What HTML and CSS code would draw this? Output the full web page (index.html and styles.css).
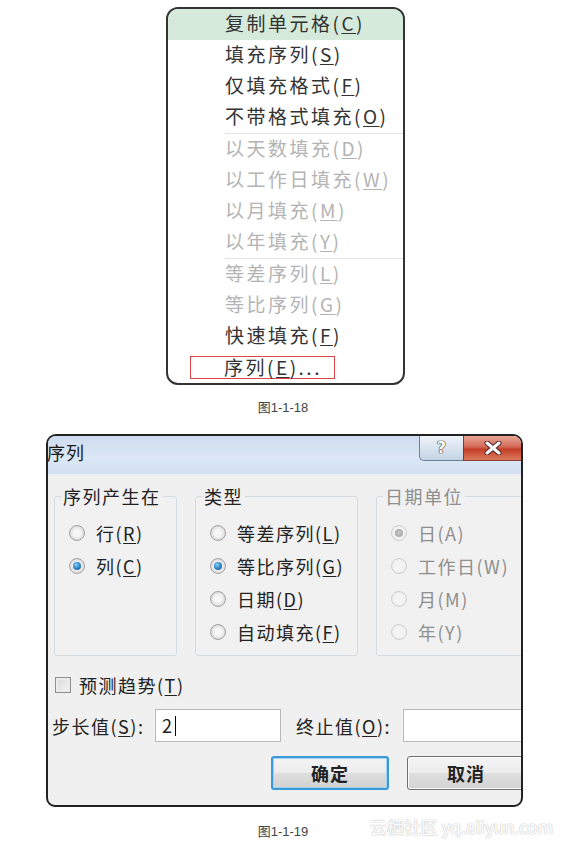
FILE: index.html
```html
<!DOCTYPE html>
<html lang="zh-CN">
<head>
    <meta charset="UTF-8">
    <meta name="viewport" content="width=device-width, initial-scale=1.0">
    <title>序列</title>
    <link rel="stylesheet" href="styles.css">
</head>
<body>

<!-- fill handle menu -->
<div class="menu">
    <div class="item active">复制单元格(<u>C</u>)</div>
    <div class="item">填充序列(<u>S</u>)</div>
    <div class="item">仅填充格式(<u>F</u>)</div>
    <div class="item">不带格式填充(<u>O</u>)</div>
    <div class="sep"></div>
    <div class="item off">以天数填充(<u>D</u>)</div>
    <div class="item off">以工作日填充(<u>W</u>)</div>
    <div class="item off">以月填充(<u>M</u>)</div>
    <div class="item off">以年填充(<u>Y</u>)</div>
    <div class="sep"></div>
    <div class="item off">等差序列(<u>L</u>)</div>
    <div class="item off">等比序列(<u>G</u>)</div>
    <div class="item">快速填充(<u>F</u>)</div>
    <div class="item pick"><span class="mark">序列(<u>E</u>)...</span></div>
</div>
<p class="caption">图1-1-18</p>

<!-- series dialog -->
<div class="dialog">
    <div class="titlebar">
        <span class="title">序列</span>
        <div class="win-btns">
            <span class="help">?</span>
            <span class="close">
                <svg width="20" height="14" viewBox="0 0 20 14">
                    <path d="M4 2 L16 12 M16 2 L4 12" stroke="#4a2a2a" stroke-width="5" stroke-linecap="round"/>
                    <path d="M4 2 L16 12 M16 2 L4 12" stroke="#fff" stroke-width="3" stroke-linecap="round"/>
                </svg>
            </span>
        </div>
    </div>
    <div class="dlg-body">
        <div class="groups">
            <fieldset class="group g1">
                <legend>序列产生在</legend>
                <div class="opt"><span class="radio"></span>行(<u>R</u>)</div>
                <div class="opt"><span class="radio on"></span>列(<u>C</u>)</div>
            </fieldset>
            <fieldset class="group g2">
                <legend>类型</legend>
                <div class="opt"><span class="radio"></span>等差序列(<u>L</u>)</div>
                <div class="opt"><span class="radio on"></span>等比序列(<u>G</u>)</div>
                <div class="opt"><span class="radio"></span>日期(<u>D</u>)</div>
                <div class="opt"><span class="radio"></span>自动填充(<u>F</u>)</div>
            </fieldset>
            <fieldset class="group g3 disabled">
                <legend>日期单位</legend>
                <div class="opt"><span class="radio on"></span>日(A)</div>
                <div class="opt"><span class="radio"></span>工作日(W)</div>
                <div class="opt"><span class="radio"></span>月(M)</div>
                <div class="opt"><span class="radio"></span>年(Y)</div>
            </fieldset>
        </div>
        <div class="check-row"><span class="checkbox"></span>预测趋势(<u>T</u>)</div>
        <div class="field-row">
            <span class="field-label">步长值(<u>S</u>):</span>
            <div class="input step">2<span class="caret"></span></div>
            <span class="field-label end">终止值(<u>O</u>):</span>
            <div class="input stop"></div>
        </div>
        <div class="btn-row">
            <button class="btn ok">确定</button>
            <button class="btn">取消</button>
        </div>
    </div>
</div>
<p class="caption second">图1-1-19</p>

<div class="watermark">云栖社区 yq.aliyun.com</div>

</body>
</html>
```

FILE: styles.css
```css
body {
    margin: 0;
    padding: 0;
    background-color: #fff;
    font-family: "Noto Sans CJK SC", "Noto Sans", sans-serif;
    color: #222;
    position: relative;
    width: 566px;
    height: 846px;
    overflow: hidden;
}
u {
    text-decoration-thickness: 1px;
    text-underline-offset: 2px;
}

/* menu */
.menu {
    width: 239px;
    margin: 7px 0 0 166px;
    border: 2px solid #333;
    border-radius: 12px;
    box-sizing: border-box;
    overflow: hidden;
    background-color: #fff;
}
.item {
    height: 31px;
    line-height: 27px;
    padding-left: 57px;
    font-size: 19px;
    letter-spacing: 2.5px;
    color: #333;
    white-space: nowrap;
}
.item.active {
    background-color: #d5eadb;
}
.item.off {
    color: #b4b4b4;
}
.sep {
    height: 1px;
    margin-left: 57px;
    background-color: #e3e3e3;
}
.item.pick {
    padding-left: 22px;
    display: flex;
    align-items: center;
}
.mark {
    display: block;
    box-sizing: border-box;
    width: 145px;
    height: 23px;
    line-height: 20px;
    padding-left: 33px;
    border: 1.5px solid #e04444;
}

.caption {
    margin: 15px 0 0;
    text-align: center;
    font-family: "Liberation Sans", "Noto Sans CJK SC", sans-serif;
    font-size: 13px;
    line-height: 16px;
    color: #444;
}
.caption.second {
    margin-top: 17px;
}

/* dialog */
.dialog {
    width: 477px;
    height: 373px;
    margin: 18px 0 0 46px;
    border: 2px solid #222;
    border-radius: 10px 10px 9px 9px;
    box-sizing: border-box;
    overflow: hidden;
    background-color: #f0f0f0;
}
.titlebar {
    height: 38px;
    display: flex;
    justify-content: space-between;
    align-items: flex-start;
    background: linear-gradient(180deg, #cddcee 0%, #dbe7f5 55%, #d3e1f1 100%);
    border-bottom: 1px solid #e9eff7;
}
.title {
    line-height: 32px;
    font-size: 18px;
    letter-spacing: 1px;
    color: #1c1c1c;
    margin-left: -1px;
}
.win-btns {
    display: flex;
    margin-right: -1px;
}
.help {
    width: 44px;
    height: 25px;
    box-sizing: border-box;
    border: 1px solid #6f8299;
    border-top: none;
    border-right: none;
    border-radius: 0 0 0 5px;
    background: linear-gradient(180deg, #eef3f9 0%, #d9e3ef 50%, #c4d3e4 100%);
    text-align: center;
    font-family: "DejaVu Sans", sans-serif;
    font-weight: bold;
    font-size: 16px;
    line-height: 24px;
    color: #fff;
    text-shadow: 0 0 1px #333, 0 0 1px #333, 0 0 1px #333;
}
.close {
    width: 59px;
    height: 25px;
    box-sizing: border-box;
    border-left: 1px solid #7b3a32;
    border-bottom: 1px solid #8a3b30;
    background: linear-gradient(180deg, #e9a595 0%, #d26a56 45%, #c43e28 55%, #dc7a5c 100%);
    display: flex;
    justify-content: center;
    align-items: center;
}

.dlg-body {
    padding: 9px 0 0 6px;
}
.groups {
    display: flex;
    gap: 18px;
}
.group {
    margin: 0;
    padding: 8px 0 5px 14px;
    border: 1px solid #d3dbe1;
    border-radius: 3px;
    box-sizing: border-box;
    height: 172px;
    flex-shrink: 0;
    background-color: #f1f1f1;
}
.group legend {
    margin-left: -8px;
    padding: 0 2px;
    font-size: 18px;
    letter-spacing: 1.5px;
    line-height: 24px;
    color: #222;
    white-space: nowrap;
}
.g1 { width: 123px; }
.g2 { width: 163px; }
.g3 { width: 170px; }
.opt {
    height: 33px;
    display: flex;
    align-items: center;
    font-size: 18px;
    letter-spacing: 1.5px;
    white-space: nowrap;
    color: #222;
}
.radio {
    width: 16px;
    height: 16px;
    box-sizing: border-box;
    border-radius: 50%;
    border: 1px solid #a3a3a3;
    background: radial-gradient(circle at 50% 50%, #f6f6f6 0 35%, #dcdcdc 70%, #e8e8e8 100%);
    margin-right: 11px;
    position: relative;
    flex-shrink: 0;
}
.radio.on::after {
    content: "";
    position: absolute;
    left: 3px;
    top: 3px;
    width: 8px;
    height: 8px;
    border-radius: 50%;
    background: radial-gradient(circle at 40% 35%, #8ed0f7 0%, #2f86c8 50%, #164f86 100%);
}
.disabled legend,
.disabled .opt {
    color: #8e8e8e;
}
.disabled .radio {
    border-color: #cfcfcf;
    background: radial-gradient(circle, #f4f4f4 0 45%, #e6e6e6 100%);
}
.disabled .radio.on::after {
    background: radial-gradient(circle, #c9c9c9 0%, #9c9c9c 100%);
}

.check-row {
    display: flex;
    align-items: center;
    height: 22px;
    margin: 18px 0 0 1px;
    font-size: 18px;
    letter-spacing: 1.5px;
}
.checkbox {
    width: 16px;
    height: 16px;
    box-sizing: border-box;
    border: 1px solid #8f8f8f;
    background: linear-gradient(135deg, #d8d8d8 0%, #f4f4f4 100%);
    box-shadow: inset 0 0 0 2px #ebebeb;
    margin-right: 8px;
}

.field-row {
    display: flex;
    align-items: center;
    margin-top: 13px;
    font-size: 18px;
    letter-spacing: 1.5px;
    white-space: nowrap;
}
.field-label {
    margin-left: -2px;
    width: 103px;
    flex-shrink: 0;
}
.field-label.end {
    margin-left: 15px;
    width: 107px;
}
.input {
    height: 33px;
    box-sizing: border-box;
    border: 1px solid #b9b9b9;
    background-color: #fff;
    line-height: 31px;
    padding-left: 6px;
    font-size: 18px;
    flex-shrink: 0;
}
.input.step { width: 126px; }
.input.stop { width: 140px; }
.caret {
    display: inline-block;
    width: 1px;
    height: 20px;
    background-color: #000;
    vertical-align: -3px;
    margin-left: 1px;
}

.btn-row {
    display: flex;
    gap: 18px;
    margin: 14px 0 0 217px;
}
.btn {
    width: 118px;
    height: 34px;
    flex-shrink: 0;
    border: 1px solid #707070;
    border-radius: 3px;
    background: linear-gradient(180deg, #f4f4f4 0%, #ececec 48%, #dedede 52%, #d2d2d2 100%);
    box-shadow: inset 0 0 0 1px #fbfbfb;
    font-family: "Noto Sans CJK SC", sans-serif;
    font-size: 18px;
    font-weight: bold;
    letter-spacing: 1px;
    color: #222;
    padding: 0;
}
.btn.ok {
    border: 2px solid #3d9ad8;
    box-shadow: inset 0 0 0 1px #9fd3f3;
}

.watermark {
    position: absolute;
    left: 370px;
    top: 814px;
    font-family: "Noto Sans CJK SC", sans-serif;
    font-size: 17px;
    color: #fff;
    text-shadow: 0 0 1px #c8c8c8, 0 0 1px #c8c8c8, 0 0 2px #d6d6d6;
    white-space: nowrap;
}
```
